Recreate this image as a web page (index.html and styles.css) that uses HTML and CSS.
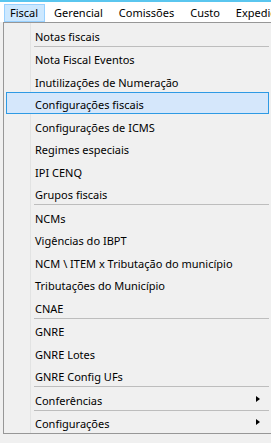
FILE: index.html
```html
<!DOCTYPE html>
<html>
<head>
<meta charset="utf-8">
<link rel="stylesheet" href="styles.css">
</head>
<body>
<div class="topband"></div>
<nav class="menubar">
  <span class="mitem active">Fiscal</span>
  <span class="mitem">Gerencial</span>
  <span class="mitem">Comissões</span>
  <span class="mitem">Custo</span>
  <span class="mitem">Expedição</span>
</nav>
<div class="dropdown">
  <div class="item">Notas fiscais</div>
  <div class="sep"></div>
  <div class="item">Nota Fiscal Eventos</div>
  <div class="item">Inutilizações de Numeração</div>
  <div class="item hover">Configurações fiscais</div>
  <div class="item">Configurações de ICMS</div>
  <div class="item">Regimes especiais</div>
  <div class="item">IPI CENQ</div>
  <div class="item">Grupos fiscais</div>
  <div class="sep"></div>
  <div class="item">NCMs</div>
  <div class="item">Vigências do IBPT</div>
  <div class="item">NCM \ ITEM x Tributação do município</div>
  <div class="item">Tributações do Município</div>
  <div class="item">CNAE</div>
  <div class="sep"></div>
  <div class="item">GNRE</div>
  <div class="item">GNRE Lotes</div>
  <div class="item">GNRE Config UFs</div>
  <div class="sep"></div>
  <div class="item sub">Conferências<span class="arrow"></span></div>
  <div class="sep"></div>
  <div class="item sub">Configurações<span class="arrow"></span></div>
</div>
</body>
</html>
```

FILE: styles.css
```css
html, body {
  margin: 0;
  padding: 0;
  background: #f0f0f0;
  font-family: "Noto Sans", sans-serif;
  font-size: 11px;
  color: #000;
}
.topband {
  height: 2px;
  background: #5ac6ef;
}
.menubar {
  display: flex;
  height: 20px;
  background: #ffffff;
  align-items: stretch;
  padding-left: 4px;
  white-space: nowrap;
  overflow: hidden;
}
.mitem {
  padding: 0 6px 0 5px;
  line-height: 16px;
  border: 1px solid transparent;
  margin-top: 2px;
  margin-right: 3px;
}
.mitem.active {
  background: #cce8ff;
  border-color: #99d1ff;
}
.dropdown {
  margin-left: 3px;
  width: 263px;
  border: 1px solid #979797;
  background: #f0f0f0 linear-gradient(#e2e3e3, #e2e3e3) no-repeat 26px 0 / 1px 100%;
  padding: 0 2px;
  box-sizing: content-box;
}
.item {
  position: relative;
  height: 22.5px;
  line-height: 21px;
  padding-top: 1.5px;
  padding-left: 28px;
  white-space: nowrap;
  border: 1px solid transparent;
  box-sizing: border-box;
}
.item.hover {
  background: #d5e7fb;
  border-color: #2e9ae4;
}
.sep {
  height: 1px;
  margin: 0 0 0 28px;
  background: #bdbdbd;
}
.arrow {
  position: absolute;
  right: 8px;
  top: 7.5px;
  width: 0;
  height: 0;
  border-left: 4px solid #000;
  border-top: 3.5px solid transparent;
  border-bottom: 3.5px solid transparent;
}
```
